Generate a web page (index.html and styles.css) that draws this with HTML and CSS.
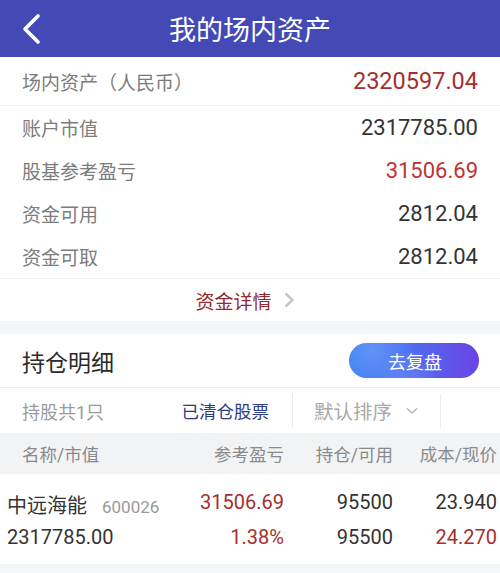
FILE: index.html
```html
<!DOCTYPE html>
<html lang="zh-CN">
<head>
    <meta charset="UTF-8">
    <meta name="viewport" content="width=device-width, initial-scale=1.0">
    <title>我的场内资产</title>
    <link rel="stylesheet" href="styles.css">
</head>
<body>

    <div class="topbar">
        <svg class="back" width="22" height="32" viewBox="0 0 22 32">
            <polyline points="18,3 5,16 18,29" fill="none" stroke="#fff" stroke-width="3.6" stroke-linecap="round" stroke-linejoin="round"/>
        </svg>
        <h1>我的场内资产</h1>
    </div>

    <div class="summary">
        <div class="sum-row main">
            <span class="label">场内资产（人民币）</span>
            <span class="value red-dark big">2320597.04</span>
        </div>
        <div class="sum-row">
            <span class="label">账户市值</span>
            <span class="value">2317785.00</span>
        </div>
        <div class="sum-row">
            <span class="label">股基参考盈亏</span>
            <span class="value red">31506.69</span>
        </div>
        <div class="sum-row">
            <span class="label">资金可用</span>
            <span class="value">2812.04</span>
        </div>
        <div class="sum-row">
            <span class="label">资金可取</span>
            <span class="value">2812.04</span>
        </div>
        <div class="detail-link">
            <span>资金详情</span>
            <svg width="12" height="16" viewBox="0 0 12 16">
                <polyline points="2.5,1.5 9.5,8 2.5,14.5" fill="none" stroke="#c6c6c6" stroke-width="2.4"/>
            </svg>
        </div>
    </div>

    <div class="holdings">
        <div class="holdings-head">
            <h2>持仓明细</h2>
            <button class="review-btn">去复盘</button>
        </div>

        <div class="tabs">
            <div class="tab-cell first">
                <span class="count">持股共1只</span>
                <span class="cleared">已清仓股票</span>
            </div>
            <div class="tab-cell sort">
                <span>默认排序</span>
                <svg width="12" height="8" viewBox="0 0 12 8">
                    <polyline points="1,1.5 6,6 11,1.5" fill="none" stroke="#b0b0b0" stroke-width="1.3"/>
                </svg>
            </div>
            <div class="tab-cell"></div>
        </div>

        <div class="table-head">
            <span class="col-name">名称/市值</span>
            <span>参考盈亏</span>
            <span>持仓/可用</span>
            <span>成本/现价</span>
        </div>

        <div class="stock-row">
            <span class="col-name"><span class="stock-name">中远海能</span><span class="code">600026</span></span>
            <span class="red-dark">31506.69</span>
            <span>95500</span>
            <span>23.940</span>

            <span class="col-name">2317785.00</span>
            <span class="red-dark">1.38%</span>
            <span>95500</span>
            <span class="red-dark">24.270</span>
        </div>
    </div>

</body>
</html>
```

FILE: styles.css
```css
body {
    margin: 0;
    font-family: Roboto, "Noto Sans CJK SC", sans-serif;
    background-color: #f4f5f7;
    color: #333;
}
.topbar {
    height: 57px;
    background-color: #434ab6;
    display: flex;
    align-items: center;
    justify-content: center;
    position: relative;
}
.topbar .back {
    position: absolute;
    left: 20px;
    top: 13px;
}
.topbar h1 {
    margin: 0;
    color: #fff;
    font-size: 27px;
    font-weight: normal;
}
.summary {
    background-color: #fff;
}
.sum-row {
    height: 43px;
    padding: 0 22px;
    display: flex;
    align-items: center;
    justify-content: space-between;
}
.sum-row.main {
    height: 48px;
    border-bottom: 1px solid #f0f0f0;
}
.label {
    font-size: 19px;
    color: #7c7c7c;
}
.value {
    font-size: 22px;
    color: #333;
}
.value.big {
    font-size: 23.5px;
}
.red {
    color: #bc3535;
}
.red-dark {
    color: #a52f2f;
}
.detail-link {
    height: 42px;
    border-top: 1px solid #f0f0f0;
    display: flex;
    align-items: center;
    justify-content: center;
    gap: 11px;
    padding-right: 10px;
    font-size: 19px;
    color: #8e2b2b;
}
.holdings {
    margin-top: 13px;
    background-color: #fff;
}
.holdings-head {
    height: 53px;
    padding: 0 21px 0 22px;
    display: flex;
    align-items: center;
    justify-content: space-between;
    border-bottom: 1px solid #eeeeee;
}
.holdings-head h2 {
    margin: 0;
    font-size: 23px;
    font-weight: normal;
    color: #2a2a2a;
}
.review-btn {
    width: 130px;
    height: 35px;
    border: none;
    border-radius: 18px;
    padding-left: 8px;
    color: #fff;
    font-size: 18px;
    font-family: inherit;
    background:
        radial-gradient(circle at 18% 20%, rgba(120, 170, 255, 0.55) 0, rgba(120, 170, 255, 0) 38%),
        radial-gradient(circle at 45% 110%, rgba(140, 160, 255, 0.35) 0, rgba(140, 160, 255, 0) 40%),
        linear-gradient(90deg, #3f7ff0 0%, #4e6ef0 45%, #6a44e4 100%);
}
.tabs {
    height: 45px;
    display: grid;
    grid-template-columns: 292px 148px 1fr;
    align-items: center;
}
.tab-cell {
    height: 34px;
    display: flex;
    align-items: center;
}
.tab-cell + .tab-cell {
    border-left: 1px solid #ebebeb;
}
.tab-cell.first {
    justify-content: space-between;
    padding: 0 23px 0 22px;
}
.count {
    font-size: 18px;
    color: #9a9a9a;
}
.cleared {
    font-size: 17.5px;
    color: #2e3b80;
}
.tab-cell.sort {
    padding-left: 21px;
    gap: 14px;
    font-size: 19.5px;
    color: #a8a8a8;
}
.table-head,
.stock-row {
    display: grid;
    grid-template-columns: 1fr 109px 109px 104px;
    padding-right: 3px;
    text-align: right;
}
.table-head {
    height: 41px;
    align-items: center;
    background-color: #f2f3f5;
    font-size: 17.5px;
    color: #8a8a8a;
}
.table-head .col-name {
    padding-left: 22px;
}
.col-name {
    text-align: left;
}
.stock-row {
    height: 90px;
    align-content: center;
    row-gap: 6px;
    font-size: 20px;
    color: #333;
}
.stock-row .col-name {
    padding-left: 7px;
}
.code {
    margin-left: 15px;
    font-size: 17px;
    color: #999;
}
```
